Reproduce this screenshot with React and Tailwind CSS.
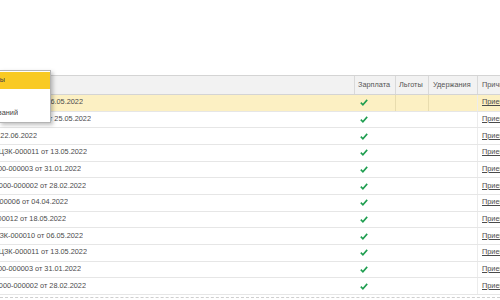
import React from 'react';

const rows = [
  { text: 'Прием на работу ЦЗК-000012 от 16.05.2022', w: 'w-[83px]', selected: true },
  { text: 'Прием на работу ЦЗК-000013 от 25.05.2022', w: 'w-[91px]' },
  { text: 'Прием на работу ЦЗК-000014 от 22.06.2022', w: 'w-[37px]' },
  { text: 'Кадровый перевод ЦЗК-000011 от 13.05.2022', w: 'w-[87px]' },
  { text: 'Прием на работу 0000-000003 от 31.01.2022', w: 'w-[81px]' },
  { text: 'Прием на работу 0000-000002 от 28.02.2022', w: 'w-[86px]' },
  { text: 'Прием на работу ЦЗК-000006 от 04.04.2022', w: 'w-[68px]' },
  { text: 'Прием на работу ЦЗК-000012 от 18.05.2022', w: 'w-[66px]' },
  { text: 'Прием на работу ЦЗК-000010 от 06.05.2022', w: 'w-[83px]' },
  { text: 'Кадровый перевод ЦЗК-000011 от 13.05.2022', w: 'w-[87px]' },
  { text: 'Прием на работу 0000-000003 от 31.01.2022', w: 'w-[81px]' },
  { text: 'Прием на работу 0000-000002 от 28.02.2022', w: 'w-[86px]' },
];

const menu = [
  { text: 'Выбрать формы', w: 'w-[5px]', active: true },
  { text: '', w: 'w-[0px]' },
  { text: 'Список оснований', w: 'w-[18px]' },
];

const Check = () => (
  <svg width="8" height="7" viewBox="0 0 8 7">
    <polyline points="0.8,3.6 2.9,5.8 7.2,0.9" fill="none" stroke="#1f9e50" strokeWidth="1.6" />
  </svg>
);

const App = () => {
  return (
    <div
      className="relative w-[500px] h-[300px] overflow-hidden bg-white text-[7.33px] text-[#4a4a4a]"
      style={{ fontFamily: '"Liberation Sans", Arial, sans-serif' }}
    >
      <div className="h-[75px]" />

      {/* header */}
      <div className="flex h-[20px] bg-[#f2f2f2] border-t border-b border-[#d4d4d4] text-[#555]">
        <div className="w-[354px] shrink-0" />
        <div className="w-[41px] shrink-0 border-l border-[#d9d9d9] pl-[3px] flex items-center">Зарплата</div>
        <div className="w-[33px] shrink-0 border-l border-[#d9d9d9] pl-[3px] flex items-center">Льготы</div>
        <div className="w-[49px] shrink-0 border-l border-[#d9d9d9] pl-[4px] flex items-center">Удержания</div>
        <div className="flex-1 min-w-0 overflow-hidden border-l border-[#d9d9d9] pl-[4px] flex items-center whitespace-nowrap">Причина</div>
      </div>

      {/* rows */}
      {rows.map((row, i) => (
        <div
          key={i}
          className={`flex h-[16.67px] border-b border-[#e6e6e6] ${row.selected ? 'bg-[#fcf0c3]' : 'bg-white'}`}
        >
          <div className="w-[354px] shrink-0 flex items-center">
            <div className={`${row.w} flex justify-end overflow-hidden whitespace-nowrap`}>
              <span className="shrink-0">{row.text}</span>
            </div>
          </div>
          <div className="w-[41px] shrink-0 flex items-center pl-[6px]">
            <Check />
          </div>
          <div className={`w-[33px] shrink-0 border-l ${row.selected ? 'border-[#e8dcae]' : 'border-transparent'}`} />
          <div className={`w-[49px] shrink-0 border-l ${row.selected ? 'border-[#e8dcae]' : 'border-transparent'}`} />
          <div className="flex-1 min-w-0 overflow-hidden border-l border-[#ececec] pl-[4px] flex items-center whitespace-nowrap">
            <span className="underline">Прием на работу</span>
          </div>
        </div>
      ))}

      <div className="mt-[2px] border-t border-dashed border-[#cfcfcf]" />

      {/* popup menu */}
      <div className="absolute left-[-1px] top-[70px] w-[52px] h-[53px] bg-white border border-[#b4b4b4] shadow-[2px_2px_4px_rgba(0,0,0,0.25)] pt-[1px]">
        {menu.map((item, i) => (
          <div
            key={i}
            className={`h-[16.67px] flex items-center ${item.active ? 'bg-[#f9ca24]' : ''}`}
          >
            <div className={`${item.w} flex justify-end overflow-hidden whitespace-nowrap text-[#444]`}>
              {item.text && <span className="shrink-0">{item.text}</span>}
            </div>
          </div>
        ))}
      </div>
    </div>
  );
};

export default App;
